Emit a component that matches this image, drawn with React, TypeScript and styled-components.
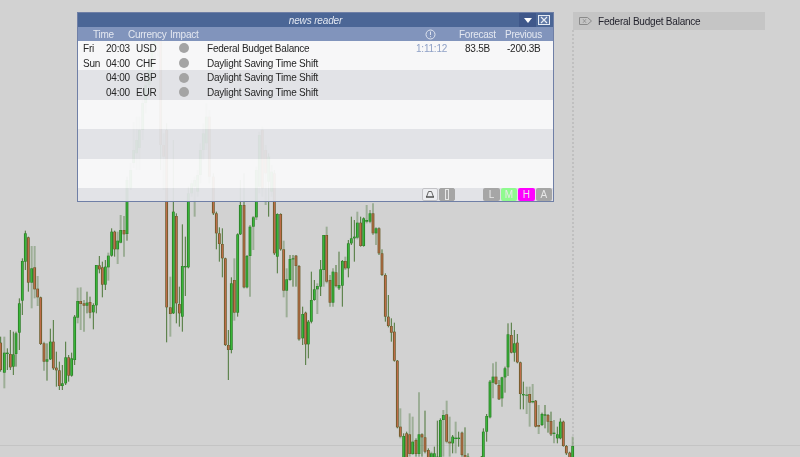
import React from "react";
import styled, { createGlobalStyle } from "styled-components";

const Global = createGlobalStyle`
  html, body { margin: 0; padding: 0; background: #d2d2d2; overflow: hidden; }
  body { font-family: "Liberation Sans", Arial, sans-serif; }
`;

const Page = styled.div`
  position: relative;
  width: 800px;
  height: 457px;
  overflow: hidden;
  background: #d2d2d2;
  filter: blur(0.35px);
`;
const ChartSvg = styled.svg`
  display: block;
`;
const Window = styled.section`
  position: absolute;
  left: 77px;
  top: 12px;
  width: 475px;
  height: 188px;
  border: 1px solid #6f7fa6;
  display: flex;
  flex-direction: column;
`;
const TitleBar = styled.header`
  position: relative;
  height: 14px;
  background: #4b6696;
  display: flex;
  align-items: center;
  justify-content: center;
`;
const Title = styled.span`
  font-size: 10px;
  letter-spacing: -0.15px;
  font-style: italic;
  color: #e3e8f2;
`;
const TitleButtons = styled.div`
  position: absolute;
  right: 3px;
  top: 0;
  height: 14px;
  display: flex;
  align-items: center;
  gap: 2px;
`;
const MenuButton = styled.div`
  width: 17px;
  height: 14px;
  background: #3f578a;
  display: flex;
  align-items: center;
  justify-content: center;
`;
const HeaderRow = styled.div`
  height: 14px;
  background: #8194bc;
  color: #e4e8f1;
  font-size: 10px;
  letter-spacing: -0.25px;
  display: grid;
  grid-template-columns: 35px 42px 255px 34px 46px 36px;
  align-items: center;
  padding-left: 15px;
`;
const Rows = styled.div`
  flex: 1;
  display: flex;
  flex-direction: column;
  min-height: 0;
`;
const Row = styled.div<{ $shade?: boolean; $tall?: boolean }>`
  height: ${(p) => (p.$tall ? "29.4px" : "14.7px")};
  flex: none;
  background: ${(p) => (p.$shade ? "rgba(226,227,232,.94)" : "rgba(249,249,250,.95)")};
  color: #262626;
  font-size: 10px;
  letter-spacing: -0.22px;
  display: grid;
  grid-template-columns: 23px 30px 34px 37px 209px 43px 46px 36px;
  align-items: center;
  padding-left: 5px;
`;
const Impact = styled.span`
  width: 10px;
  height: 10px;
  border-radius: 50%;
  background: #a4a4a4;
  margin-left: 9px;
`;
const Countdown = styled.span`
  color: #8fa1c6;
`;
const Amount = styled.span<{ $pad: number }>`
  padding-left: ${(p) => p.$pad}px;
`;
const Footer = styled.footer`
  flex: 1;
  background: rgba(226,227,232,.94);
  display: flex;
  justify-content: flex-end;
  align-items: center;
  padding-right: 1px;
  gap: 1px;
`;
const ToolButton = styled.div<{ $light?: boolean }>`
  width: 16px;
  height: 13px;
  box-sizing: border-box;
  border-radius: 2px;
  display: flex;
  align-items: center;
  justify-content: center;
  background: ${(p) => (p.$light ? "#ecedf0" : "#a5a5a5")};
  border: 1px solid ${(p) => (p.$light ? "#c2c2c6" : "#a5a5a5")};
`;
const FooterGap = styled.div`
  width: 26px;
`;
const Level = styled.div<{ $bg: string }>`
  width: 16.4px;
  height: 13px;
  border-radius: 2px;
  background: ${(p) => p.$bg};
  color: #e8e8e8;
  font-size: 10px;
  line-height: 13px;
  text-align: center;
`;
const SideItem = styled.aside`
  position: absolute;
  left: 573px;
  top: 12px;
  width: 192px;
  height: 18px;
  background: #c5c5c5;
  display: flex;
  align-items: center;
  gap: 6px;
  padding-left: 6px;
  box-sizing: border-box;
  font-size: 10px;
  letter-spacing: -0.22px;
  color: #24242e;
`;

type C = [number, number, number, number, number, number, number];
const candles: C[] = [
  [2,458,540,440,545,0,0],[13,488,548,440,595,1,1],[22,488,492,475,540,1,0],[31,492,532,420,540,0,0],[40,493,530,425,555,1,0],[48,430,492,425,530,1,0],[58,340,428,325,480,1,0],[67,213,332,205,375,1,0],[76,130,215,122,240,1,0],[85,142,278,140,305,0,0],[95,235,278,168,355,1,1],[104,232,298,168,325,0,1],[113,296,322,258,348,0,1],[122,322,462,320,465,0,0],[132,460,515,455,542,0,1],[141,508,515,460,572,1,0],[151,455,508,416,510,1,0],[160,455,535,390,540,0,0],[169,533,541,485,590,0,0],[178,541,588,515,600,0,0],[187,580,588,525,600,1,0],[197,502,580,455,585,1,0],[206,502,557,495,575,0,0],[215,505,557,488,560,1,0],[224,380,510,375,525,1,0],[233,333,383,293,400,1,1],[242,333,342,292,420,0,1],[252,340,347,330,425,0,1],[261,338,347,305,370,1,0],[270,336,368,320,385,0,0],[280,345,367,340,418,1,0],[289,225,346,225,370,1,0],[298,226,238,198,250,0,0],[307,232,284,215,322,0,0],[316,230,284,210,300,1,0],[325,197,232,188,272,1,1],[335,125,197,115,200,1,0],[344,125,178,122,200,0,0],[353,152,178,125,222,1,1],[362,120,158,75,160,1,1],[372,120,133,78,200,0,1],
  [381,-30,132,-40,152,1,0],[392,-60,-6,-81,0,1,1],[401,-120,-81,-204,-66,1,1],[410,-150,-110,-220,-60,1,1],[418,-180,-126,-220,-60,1,1],[428,-261,-180,-270,-150,1,1],[437,-315,-261,-330,-230,1,1],[447,-360,-315,-380,-280,1,1],[456,-430,-360,-470,-340,1,1],[465,-460,-430,-471,-380,1,1],[474,-470,-440,-471,-400,0,1],[482,-471,-135,-471,-60,0,0],[491,-135,-100,-170,0,0,1],
  [500,-180,352,-200,457,0,0],[511,352,372,260,440,0,1],[520,65,370,-150,372,1,0],[529,78,340,70,400,0,0],[538,342,370,290,410,0,0],[547,228,380,103,425,1,0],[556,228,232,140,318,1,0],[565,10,232,-10,235,1,0],[575,-20,10,-30,20,1,1],[584,-30,-10,-40,80,1,1],[593,-45,5,-60,20,1,1],[601,-120,-45,-140,-20,1,1],[610,-170,-120,-200,-90,1,1],[619,-220,-140,-260,-120,1,1],[628,-220,-40,-240,-20,0,1],
  [640,-40,70,-50,75,0,0],[649,70,130,65,178,0,0],[658,130,162,112,215,0,0],[667,162,205,115,262,0,0],[676,205,465,203,468,0,0],[685,465,480,420,570,0,0],[694,280,480,262,490,1,0],[703,270,368,205,392,0,1],[713,133,368,130,380,1,0],[721,45,133,-30,135,1,0],[732,45,292,-50,295,0,0],[741,198,292,195,295,1,0],[750,110,198,105,320,1,1],[760,82,110,78,180,1,1],[769,-60,82,-70,90,1,1],[778,-165,-10,-175,10,1,1],[787,-180,-5,-190,20,0,1],[797,-120,-50,-135,45,0,1],[806,-100,-25,-110,80,1,0],[815,-55,5,-75,20,1,1],
  [823,-50,190,-60,195,0,0],[832,72,200,70,250,1,0],[842,72,178,70,182,0,0],[851,178,302,152,322,0,1],[860,268,302,235,382,1,1],[870,207,270,195,272,1,0],[879,205,208,195,290,1,0],[888,197,228,195,290,0,0],[897,228,448,225,452,0,0],
];
const c2: C[] = [
  [8,372,445,350,465,1,0],[17,368,463,365,525,0,0],[25,395,463,390,505,1,0],[34,330,395,245,400,1,0],[43,298,330,270,332,1,0],[52,288,298,280,372,1,1],[62,238,290,210,318,1,0],[71,135,240,135,290,1,1],[80,135,275,110,280,0,1],[90,270,338,255,350,0,1],[99,245,338,235,350,1,1],[108,247,288,225,292,0,0],[117,285,295,185,300,1,0],[127,213,287,210,350,1,0],[136,213,235,200,240,0,1],[145,160,235,150,262,1,0],[154,145,160,80,165,1,0],[163,140,145,90,215,1,0],[172,98,143,65,148,1,1],[182,98,168,80,170,0,0],[191,85,168,82,170,1,0],[200,90,95,45,100,1,1],[210,70,95,60,100,1,1],[219,70,130,40,135,0,1],[228,115,130,112,165,1,1],[237,115,190,112,195,0,0],[246,190,255,178,258,0,0],[256,255,380,250,395,0,0],[265,380,408,315,412,0,0],[274,408,428,385,455,0,0],[283,425,512,398,515,0,0],[292,512,712,510,715,0,0],[301,710,740,655,745,0,1],[311,738,810,730,820,1,0],[320,730,810,725,820,0,0],[329,733,792,670,800,0,1],[338,755,792,680,795,1,1],[348,750,792,745,800,0,0],[357,733,792,607,800,1,1],[366,733,742,730,800,0,0],[375,742,785,662,790,0,0],[385,780,810,775,820,0,0],[394,790,810,785,820,1,1],[403,790,810,770,820,1,0],[412,800,810,692,820,1,0],[421,690,810,685,820,1,0],[430,675,690,660,800,1,1],[440,673,755,632,760,0,1],[449,755,760,680,800,0,1],[458,740,760,735,790,1,0],[467,743,747,695,790,1,1],[476,743,747,725,770,1,0],[486,728,795,725,800,0,0],[495,795,810,712,820,0,0],[504,800,810,790,820,1,0],[545,800,810,798,820,1,0],
  [550,725,810,715,820,1,0],[560,678,725,672,755,1,0],[570,575,682,570,685,1,0],[579,560,578,520,625,1,1],[588,560,582,515,585,0,1],[597,585,628,570,630,0,0],[606,562,625,560,650,1,1],[615,535,562,530,608,1,0],[624,433,532,400,558,1,0],[634,435,488,398,490,0,0],[643,460,488,420,515,1,0],[652,458,517,432,520,0,0],[661,517,612,515,658,0,0],[670,612,616,575,658,1,0],[680,614,616,590,672,1,1],[689,612,638,590,710,0,1],[698,633,637,582,640,1,1],[707,632,710,630,712,0,0],[716,705,710,645,732,0,1],[726,672,705,668,708,1,0],[735,673,677,645,715,1,0],[744,675,695,672,728,0,0],[753,693,733,665,738,0,0],[762,728,732,690,760,1,1],[772,733,745,710,760,1,0],[781,695,745,685,748,1,0],[790,695,768,692,770,0,0],[799,768,790,765,795,0,0],[809,788,810,785,820,0,0],[818,768,810,740,820,1,1],
];

const Candle = ({ c, off }: { c: C; off: number }) => {
  const [zx, t, b, wt, wb, up, ghost] = c;
  const x = off + zx / 3;
  const y = (z: number) => 190 + z / 3;
  return (
    <g>
      <line x1={x} x2={x} y1={y(wt)} y2={y(wb)} stroke={ghost ? "#829c78" : "#4a7536"} strokeWidth={ghost ? 2 : 1} opacity={ghost ? 0.65 : 1} />
      <rect x={x - 1.4} y={y(t)} width={2.8} height={Math.max(y(b) - y(t), 1)} fill={up ? "#2a7f26" : "#6a5a28"} />
      <rect x={x - 0.5} y={y(t) + 0.5} width={1} height={Math.max(y(b) - y(t) - 1, 0.5)} fill={up ? "#3cc03c" : "#d0704f"} />
    </g>
  );
};

const Chart = () => (
  <ChartSvg width={800} height={457} viewBox="0 0 800 457">
    <line x1={0} x2={800} y1={445.5} y2={445.5} stroke="#c4c4c4" />
    <line x1={573} x2={573} y1={30} y2={457} stroke="#bcbcbc" strokeWidth="1.6" strokeDasharray="2 2" />
    {candles.map((c, i) => <Candle key={i} c={c} off={0} />)}
    {c2.map((c, i) => <Candle key={"b" + i} c={c} off={300} />)}
  </ChartSvg>
);

const events = [
  { d: "Fri", t: "20:03", c: "USD", e: "Federal Budget Balance", cd: "1:11:12", f: "83.5B", p: "-200.3B" },
  { d: "Sun", t: "04:00", c: "CHF", e: "Daylight Saving Time Shift", shade: false },
  { d: "", t: "04:00", c: "GBP", e: "Daylight Saving Time Shift", shade: true },
  { d: "", t: "04:00", c: "EUR", e: "Daylight Saving Time Shift", shade: true },
];

export default function App() {
  return (
    <Page>
      <Global />
      <Chart />
      <Window>
        <TitleBar>
          <Title>news reader</Title>
          <TitleButtons>
            <MenuButton>
              <svg width="8" height="5" viewBox="0 0 8 5"><path d="M0 0h8L4 5z" fill="#fff" /></svg>
            </MenuButton>
            <svg width="12" height="10" viewBox="0 0 12 10">
              <rect x=".5" y=".5" width="11" height="9" fill="#5f78a6" stroke="#e6ebf4" />
              <path d="M3 2l6 6M9 2l-6 6" stroke="#e6ebf4" strokeWidth="1.2" />
            </svg>
          </TitleButtons>
        </TitleBar>
        <HeaderRow>
          <span>Time</span>
          <span>Currency</span>
          <span>Impact</span>
          <svg width="11" height="11" viewBox="0 0 11 11">
            <circle cx="5.5" cy="5.5" r="4.5" fill="none" stroke="#dfe4ef" />
            <path d="M5.5 2.5v3.5" stroke="#dfe4ef" />
            <path d="M5.5 7.2v1" stroke="#dfe4ef" />
          </svg>
          <span>Forecast</span>
          <span>Previous</span>
        </HeaderRow>
        <Rows>
          {events.map((r, i) => (
            <Row key={i} $shade={r.shade}>
              <span>{r.d}</span>
              <span>{r.t}</span>
              <span>{r.c}</span>
              <Impact />
              <span>{r.e}</span>
              <Countdown>{r.cd}</Countdown>
              <Amount $pad={6}>{r.f}</Amount>
              <Amount $pad={2}>{r.p}</Amount>
            </Row>
          ))}
          <Row $tall />
          <Row $tall $shade />
          <Row $tall />
          <Footer>
            <ToolButton $light>
              <svg width="10" height="9" viewBox="0 0 10 9">
                <path d="M1.5 7L3.5 1.5h3L8.5 7" fill="none" stroke="#666" />
                <path d="M1 7h8" stroke="#444" strokeWidth="1.4" />
              </svg>
            </ToolButton>
            <ToolButton>
              <svg width="6" height="11" viewBox="0 0 6 11">
                <rect x="1.5" y=".5" width="3" height="10" fill="none" stroke="#e8e8e8" />
              </svg>
            </ToolButton>
            <FooterGap />
            <Level $bg="#a6a6a6">L</Level>
            <Level $bg="#8ffa8f">M</Level>
            <Level $bg="#ff00ff">H</Level>
            <Level $bg="#a6a6a6">A</Level>
          </Footer>
        </Rows>
      </Window>
      <SideItem>
        <svg width="13" height="8" viewBox="0 0 13 8">
          <path d="M.5.5h8l4 3.5-4 3.5h-8z" fill="none" stroke="#8a8a8a" />
          <path d="M4 2.2l3 3.6M7 2.2l-3 3.6" stroke="#8a8a8a" strokeWidth=".8" />
        </svg>
        Federal Budget Balance
      </SideItem>
    </Page>
  );
}
